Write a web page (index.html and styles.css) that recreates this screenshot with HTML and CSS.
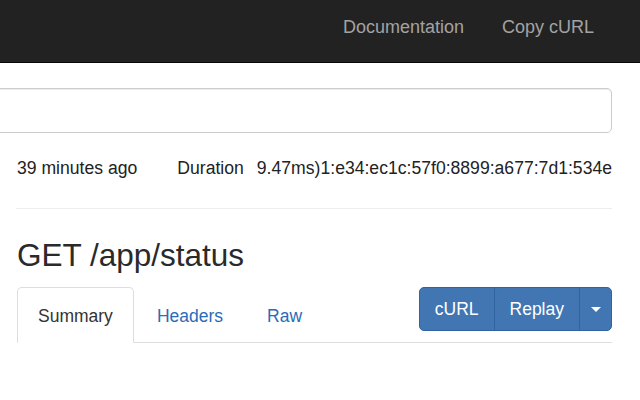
FILE: index.html
```html
<!DOCTYPE html>
<html>
<head>
<meta charset="utf-8">
<link rel="stylesheet" href="styles.css">
</head>
<body>
<header class="navbar">
  <nav class="nav-links">
    <a href="#" class="nav-link">Documentation</a>
    <a href="#" class="nav-link">Copy cURL</a>
  </nav>
</header>
<main class="container">
  <div class="search-box"></div>
  <div class="meta">
    <span class="meta-time">39 minutes ago</span>
    <span class="meta-label">Duration</span>
    <span class="meta-value">9.47ms</span>
    <span class="meta-ip">)1:e34:ec1c:57f0:8899:a677:7d1:534e</span>
  </div>
  <hr class="divider">
  <h2 class="title">GET /app/status</h2>
  <div class="tab-row">
    <ul class="tabs">
      <li class="tab active"><a href="#">Summary</a></li>
      <li class="tab"><a href="#">Headers</a></li>
      <li class="tab"><a href="#">Raw</a></li>
    </ul>
    <div class="btn-group">
      <button class="btn">cURL</button>
      <button class="btn">Replay</button>
      <button class="btn btn-caret"><span class="caret"></span></button>
    </div>
  </div>
</main>
</body>
</html>
```
FILE: styles.css
```css
* { box-sizing: border-box; }
html, body {
  margin: 0;
  padding: 0;
  width: 640px;
  height: 400px;
  overflow: hidden;
  background: #fff;
  font-family: "Liberation Sans", Arial, sans-serif;
  font-size: 18px;
  color: #333;
}
.navbar {
  height: 63px;
  background: #222;
  border-bottom: 1px solid #080808;
  display: flex;
  justify-content: flex-end;
  align-items: center;
}
.nav-links {
  display: flex;
  padding-right: 27px;
  margin-top: -8px;
}
.nav-link {
  color: #a3a3a3;
  text-decoration: none;
  padding: 0 19px;
  font-size: 18px;
  line-height: 24px;
}
.container {
  padding: 0 28px 0 17px;
}
.search-box {
  margin-top: 25px;
  margin-left: -40px;
  height: 45px;
  border: 1px solid #ccc;
  border-radius: 5px;
  box-shadow: inset 0 1px 1px rgba(0,0,0,0.075);
}
.meta {
  display: flex;
  margin-top: 23px;
  line-height: 25px;
  font-size: 17.6px;
  color: #222;
  white-space: nowrap;
}
.meta-time { margin-right: 40px; }
.meta-label { margin-right: 13px; }
.meta-ip {
  flex: 1;
  text-align: right;
  margin-left: -3px;
}
.divider {
  margin: 27px 0 0 -1px;
  border: 0;
  border-top: 1px solid #eee;
}
.title {
  margin: 26px 0 0;
  font-size: 31.5px;
  font-weight: 500;
  line-height: 40px;
  color: #2a2a2a;
}
.tab-row {
  display: flex;
  align-items: flex-start;
  margin-top: 12px;
  border-bottom: 1px solid #ddd;
}
.tabs {
  display: flex;
  list-style: none;
  margin: 0 0 -1px;
  padding: 0;
  font-size: 17.5px;
}
.tab { margin-right: 2px; }
.tab a {
  display: block;
  padding: 0 20px;
  height: 56px;
  line-height: 56px;
  border: 1px solid transparent;
  border-radius: 5px 5px 0 0;
  color: #2a6cb8;
  text-decoration: none;
}
.tab.active a {
  color: #333;
  background: #fff;
  border-color: #ddd #ddd transparent;
}
.btn-group {
  display: flex;
  margin-left: auto;
}
.btn {
  height: 44px;
  background: #4176b3;
  border: 1px solid #2f64a1;
  color: #fff;
  font-family: inherit;
  font-size: 17.5px;
  padding: 0 15px;
  margin-left: -1px;
}
.btn:first-child { border-radius: 5px 0 0 5px; margin-left: 0; }
.btn:last-child { border-radius: 0 5px 5px 0; }
.btn-caret {
  width: 33px;
  padding: 0;
  display: flex;
  align-items: center;
  justify-content: center;
}
.caret {
  width: 0;
  height: 0;
  border-left: 5px solid transparent;
  border-right: 5px solid transparent;
  border-top: 5px solid #fff;
}
```
